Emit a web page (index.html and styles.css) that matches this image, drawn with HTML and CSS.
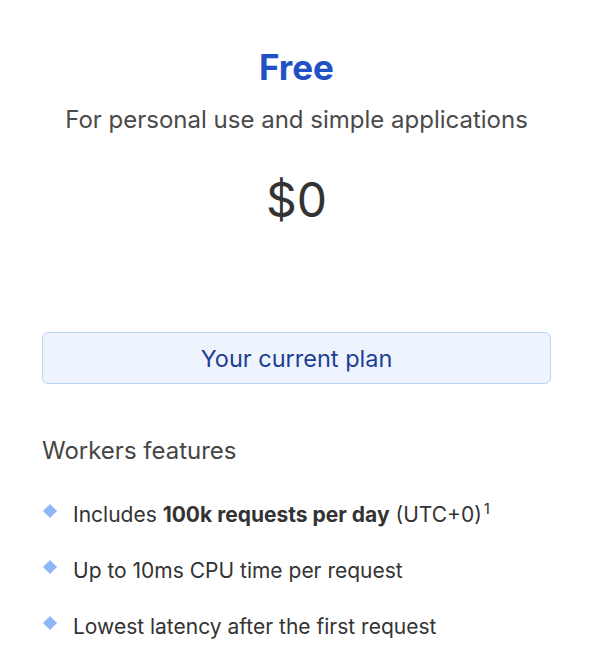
FILE: index.html
```html
<!DOCTYPE html>
<html lang="en">
<head>
    <meta charset="UTF-8">
    <title>Free plan</title>
    <link rel="stylesheet" href="styles.css">
</head>
<body>
    <div class="plan-card">
        <div class="plan-head">
            <h2 class="plan-name">Free</h2>
            <p class="plan-desc">For personal use and simple applications</p>
            <div class="plan-price">$0</div>
        </div>

        <button class="plan-button">Your current plan</button>

        <h3 class="features-title">Workers features</h3>
        <ul class="features">
            <li>Includes <b>100k requests per day</b> (UTC+0)<sup>1</sup></li>
            <li>Up to 10ms CPU time per request</li>
            <li>Lowest latency after the first request</li>
        </ul>
    </div>
</body>
</html>
```

FILE: styles.css
```css
body {
    margin: 0;
    background: #fff;
    font-family: Inter, "Liberation Sans", sans-serif;
    color: #3b3b3b;
}

.plan-card {
    padding: 46px 41px 0 42px;
}

.plan-head {
    text-align: center;
    height: 286px;
}

.plan-name {
    margin: 0;
    font-size: 35px;
    font-weight: 700;
    color: #2152c4;
    line-height: 42px;
}

.plan-desc {
    margin: 16px 0 0;
    font-size: 24px;
    color: #4a4a4a;
    line-height: 32px;
}

.plan-price {
    margin-top: 35px;
    font-size: 48px;
    color: #333;
    line-height: 58px;
}

.plan-button {
    display: block;
    width: 100%;
    height: 52px;
    background: #eef4fe;
    border: 1px solid #bcd3f5;
    border-radius: 6px;
    font-family: inherit;
    font-size: 23.5px;
    color: #1d3e95;
}

.features-title {
    margin: 51px 0 0;
    font-size: 24px;
    font-weight: 400;
    color: #454545;
    line-height: 32px;
}

.features {
    list-style: none;
    margin: 33px 0 0;
    padding: 0;
}

.features li {
    position: relative;
    padding-left: 31px;
    font-size: 21px;
    line-height: 30px;
    color: #333;
    margin-bottom: 26px;
}

.features li::before {
    content: "";
    position: absolute;
    left: 3px;
    top: 6px;
    width: 10px;
    height: 10px;
    background: #91b6f7;
    transform: rotate(45deg);
}

.features b {
    font-weight: 700;
}

.features sup {
    font-size: 15px;
    line-height: 0;
    margin-left: 2px;
}
```
